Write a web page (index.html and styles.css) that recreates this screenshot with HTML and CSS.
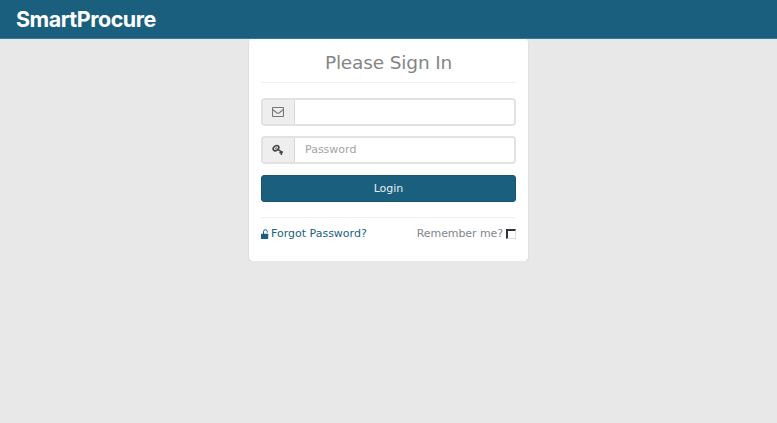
FILE: index.html
```html
<!DOCTYPE html>
<html lang="en">
<head>
  <meta charset="UTF-8">
  <meta name="viewport" content="width=device-width, initial-scale=1.0">
  <title>SmartProcure - Sign In</title>
  <link rel="stylesheet" href="styles.css">
</head>
<body>
  <header class="navbar">
    <a class="brand" href="#">SmartProcure</a>
  </header>

  <form class="signin">
    <h1 class="signin-heading">Please Sign In</h1>

    <div class="input-group">
      <span class="addon">
        <svg width="12" height="10" viewBox="0 0 12 10" fill="none" stroke="#777" stroke-width="1.1">
          <rect x="0.5" y="0.5" width="11" height="9" rx="0.8"/>
          <path d="M1 2.8L4.6 5.7Q6 6.7 7.4 5.7L11 2.8"/>
        </svg>
      </span>
      <input type="text" class="form-control" name="email" aria-label="Email">
    </div>

    <div class="input-group">
      <span class="addon">
        <svg width="12" height="12" viewBox="0 0 12 12" fill="none" stroke="#444">
          <ellipse cx="4" cy="4.2" rx="3.1" ry="2.2" transform="rotate(-38 4 4.2)" stroke-width="1.6"/>
          <path d="M3 5L5.2 3.4" stroke-width="0.9"/>
          <path d="M5.8 5.4L10.2 8.4" stroke-width="1.5"/>
          <path d="M7.4 8.8L10.9 8M9.4 7.2V11" stroke-width="1.5"/>
        </svg>
      </span>
      <input type="password" class="form-control" name="password" placeholder="Password">
    </div>

    <button type="button" class="btn-login">Login</button>

    <div class="signin-footer">
      <a class="forgot" href="#">
        <svg width="8" height="11" viewBox="0 0 8 11">
          <path d="M2.5 5V2.6a1.9 1.9 0 0 1 3.8 0V3.6" fill="none" stroke="#1a5f7e" stroke-width="1"/>
          <rect x="0" y="4.8" width="7.2" height="5.2" rx="0.4" fill="#1a5f7e"/>
        </svg>
        <span>Forgot Password?</span>
      </a>
      <label class="remember">
        <span>Remember me?</span>
        <input type="checkbox" class="check">
      </label>
    </div>
  </form>
</body>
</html>
```
FILE: styles.css
```css
* {
  box-sizing: border-box;
}
body {
  margin: 0;
  background: #e8e8e8;
  font-family: "DejaVu Sans", sans-serif;
  font-size: 11px;
  color: #7f8790;
}
.navbar {
  height: 39px;
  padding-left: 16px;
  background: #1a5f7e;
  border-bottom: 1px solid #3b7a96;
}
.brand {
  display: block;
  font-family: Inter, sans-serif;
  font-size: 21.5px;
  font-weight: 700;
  line-height: 39px;
  letter-spacing: -0.5px;
  color: #fff;
  text-decoration: none;
}
.signin {
  width: 279px;
  height: 222px;
  margin: 0 auto;
  padding: 1px 12px 0;
  background: #fff;
  border-radius: 4px;
  box-shadow: 0 1px 2px rgba(0, 0, 0, 0.12);
}
.signin-heading {
  height: 43px;
  margin: 0 0 15px;
  border-bottom: 1px solid #f0f0f0;
  font-size: 18.5px;
  font-weight: 400;
  line-height: 45px;
  letter-spacing: -0.15px;
  text-align: center;
  color: #858585;
}
.input-group {
  display: flex;
  height: 28px;
  margin-bottom: 10px;
  border: 2px solid #e2e2e2;
  border-radius: 4px;
  overflow: hidden;
}
.addon {
  display: flex;
  align-items: center;
  justify-content: center;
  width: 32px;
  padding-right: 1px;
  background: #eee;
  border-right: 1px solid #d8d8d8;
}
.form-control {
  flex: 1;
  min-width: 0;
  padding: 0 10px 2px;
  border: 0;
  outline: 0;
  font: inherit;
  background: #fff;
}
.form-control::placeholder {
  color: #a4a4a4;
}
.btn-login {
  display: block;
  width: 100%;
  height: 27px;
  margin-top: 11px;
  padding: 0;
  border: 1px solid #17556f;
  border-radius: 3px;
  background: #1a5f7e;
  font: inherit;
  color: #e4edf1;
}
.signin-footer {
  display: flex;
  justify-content: space-between;
  margin-top: 15px;
  padding-top: 9px;
  border-top: 1px solid #f0f0f0;
  line-height: 14px;
}
.forgot,
.remember {
  display: flex;
  align-items: center;
}
.forgot {
  gap: 2px;
  color: #1a5f7e;
  text-decoration: none;
}
.remember {
  gap: 3px;
  letter-spacing: -0.08px;
}
.check {
  appearance: none;
  width: 10px;
  height: 10px;
  margin: 0;
  border: 1px solid #ddd;
  border-top: 2px solid #333;
  border-left: 2px solid #333;
  background: #fff;
}
```
